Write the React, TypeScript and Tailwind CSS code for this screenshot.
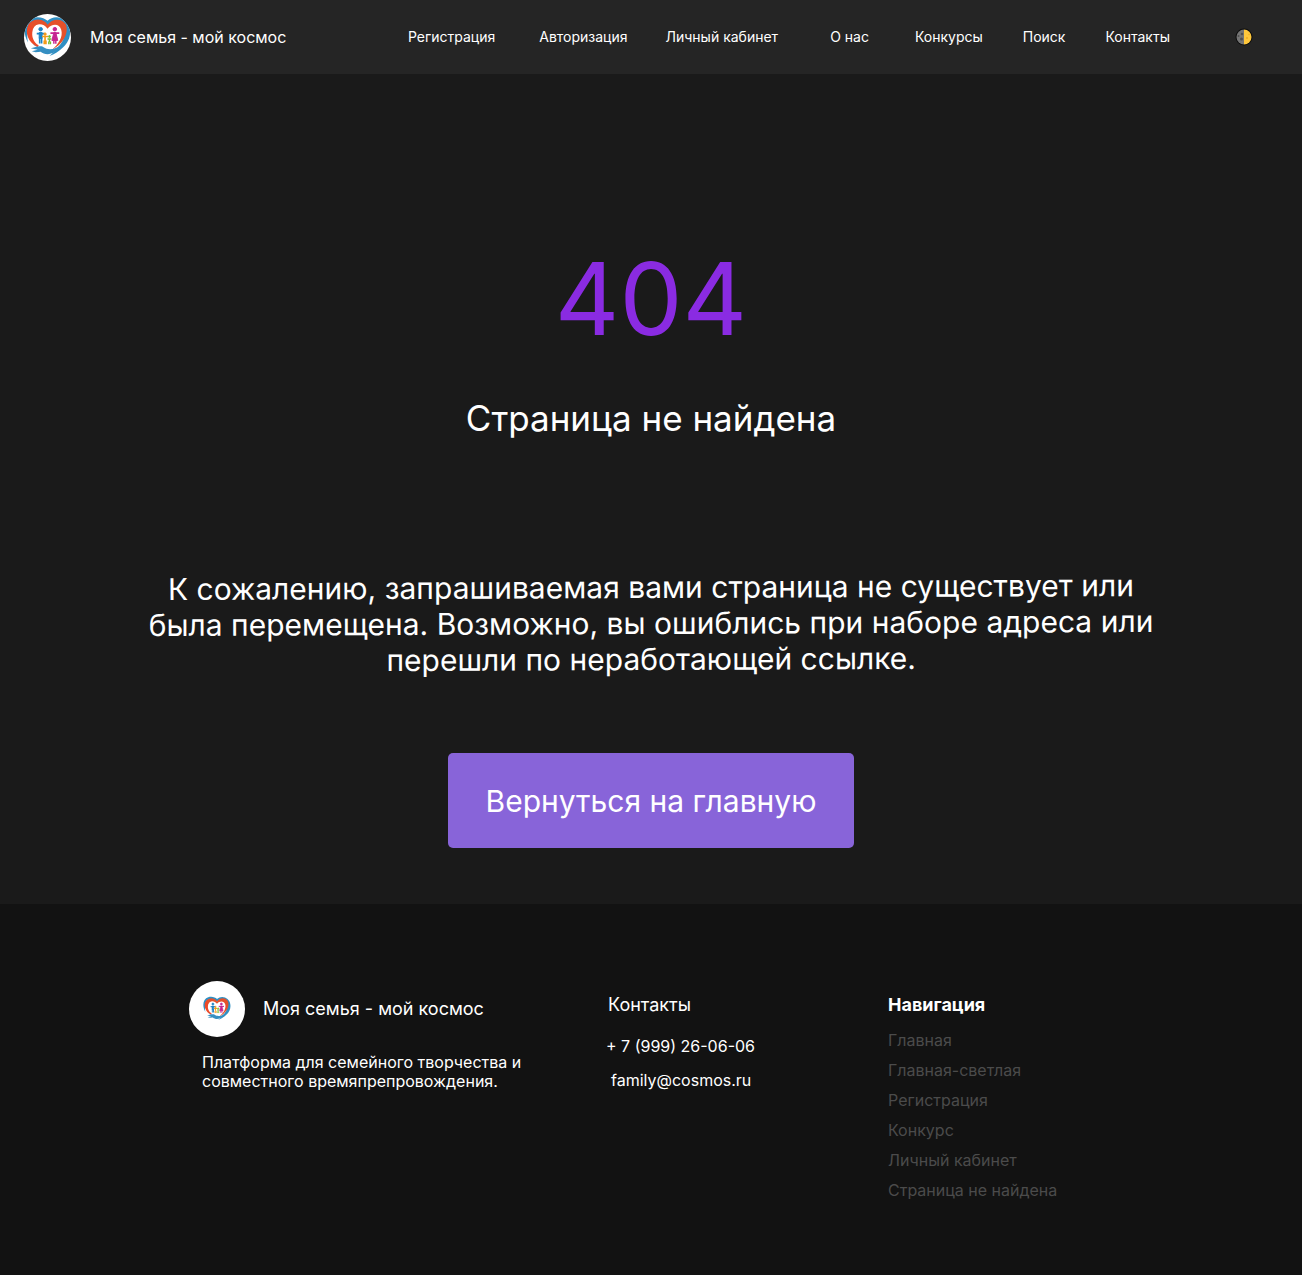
const navItems = [
  { label: 'Регистрация', gap: '' },
  { label: 'Авторизация', gap: 'ml-11' },
  { label: 'Личный кабинет', gap: 'ml-[38px]' },
  { label: 'О нас', gap: 'ml-[52px]' },
  { label: 'Конкурсы', gap: 'ml-[46px]' },
  { label: 'Поиск', gap: 'ml-10' },
  { label: 'Контакты', gap: 'ml-10' },
];

const footerLinks = ['Главная', 'Главная-светлая', 'Регистрация', 'Конкурс', 'Личный кабинет', 'Страница не найдена'];

function FamilyHeart({ className }: { className: string }) {
  return (
    <svg viewBox="0 0 48 48" className={className} aria-hidden="true">
      <path
        d="M4 29C-2 18 0 7 9 4C15 2 21 4 24 7C29 2 37 2 42 7C50 14 48 27 40 34C36 38 31 41 26 43C35 35 43 26 42 16C41 6 30 5 24 12C18 5 8 5 5 12C3 18 3 24 4 29Z"
        fill="#2f8fc3"
      />
      <path
        d="M14 34C4 29 1 19 4 12C8 4 19 4 24 11C20 9 11 8 9 16C7 23 10 29 15 32Z"
        fill="#ee4927"
      />
      <path
        d="M24 11C29 4 39 4 43 11C46 21 39 31 28 37C36 30 40 23 38 16C36 9 28 10 24 15C20 9 12 9 9 15L6 10C12 4 20 5 24 11Z"
        fill="#e5512a"
      />
      <path d="M9 30C13 36 17 31 20 34C24 37 31 37 37 32C32 42 22 43 17 38.500L12 39L8 38L14 36.500L7 35L13 33.500Z" fill="#358fc2" />
      <g fill="#1b83c5" stroke="#1b83c5">
        <circle cx="17" cy="15.500" r="1.800" />
        <path d="M13 20H21" fill="none" strokeWidth="1.800" />
        <path d="M15.500 19H18.500V25H15.500Z" />
        <path d="M16 24V30M18 24V30" strokeWidth="1.600" />
      </g>
      <g fill="#f49a18" stroke="#f49a18">
        <circle cx="21.500" cy="20.500" r="1.200" />
        <path d="M18.500 23H24.500M21.500 22V27M20.700 27V31M22.400 27V31" fill="none" strokeWidth="1.700" />
      </g>
      <g fill="#77bd32" stroke="#77bd32">
        <circle cx="26" cy="23" r="1" />
        <path d="M24 25.500H28M26 25V28.500M25.300 28V31M27 28V31" fill="none" strokeWidth="1.400" />
      </g>
      <g fill="#c62591" stroke="#c62591">
        <circle cx="31.500" cy="15.500" r="1.800" />
        <path d="M27 19.500H36" fill="none" strokeWidth="1.800" />
        <path d="M30.500 19H32.500L34.500 27H28.500Z" />
        <path d="M30.500 26V30.500M32.500 26V30.500" strokeWidth="1.500" />
      </g>
    </svg>
  );
}

function HalfMoon() {
  return (
    <svg viewBox="0 0 18 18" className="size-[18px]" aria-hidden="true">
      <circle cx="9" cy="9" r="8.500" fill="#0d0d0d" />
      <path d="M9 1.500A7.500 7.500 0 0 0 9 16.500Z" fill="#757575" />
      <path d="M9 1.500A7.500 7.500 0 0 1 9 16.500Z" fill="#ffc73b" />
      <circle cx="7" cy="6" r="1.300" fill="#4f4f4f" />
      <circle cx="3.500" cy="8" r="1" fill="#4f4f4f" />
      <circle cx="6.500" cy="11" r="1.500" fill="#4f4f4f" />
      <circle cx="12" cy="10" r="1" fill="#edab23" />
      <circle cx="14" cy="6.500" r="0.700" fill="#edab23" />
    </svg>
  );
}

export default function App() {
  return (
    <div className="flex min-h-screen flex-col bg-[#1a1a1a] font-['Inter',sans-serif] text-white">
      <header className="flex h-[74px] items-center bg-[#252525] pr-[49px] pl-6">
        <a href="#" className="flex items-center gap-[19px] whitespace-nowrap">
          <span className="flex size-[47px] items-center justify-center overflow-hidden rounded-full bg-white">
            <FamilyHeart className="size-[47px]" />
          </span>
          <span>Моя семья - мой космос</span>
        </a>
        <nav aria-label="Основное меню" className="ml-auto flex items-center text-sm whitespace-nowrap">
          {navItems.map((item) => (
            <a key={item.label} href="#" className={item.gap}>
              {item.label}
            </a>
          ))}
        </nav>
        <button type="button" aria-label="Сменить тему" className="ml-[65px]">
          <HalfMoon />
        </button>
      </header>

      <main className="flex flex-col items-center px-6 pt-[163px] pb-14 text-center">
        <h1 className="text-[100px] leading-[124px] text-[#8a2be2]">404</h1>
        <h2 className="mt-[35px] text-[35px] leading-[44px]">Страница не найдена</h2>
        <p className="mt-[129px] max-w-[1032px] -rotate-[0.23deg] text-[30px] leading-9">
          К сожалению, запрашиваемая вами страница не существует или была перемещена. Возможно, вы
          ошиблись при наборе адреса или перешли по неработающей ссылке.
        </p>
        <a href="#" className="mt-[76px] rounded-[5px] bg-[#8864d9] px-[38px] pt-[30px] pb-7 text-[30px] leading-[37px]">
          Вернуться на главную
        </a>
      </main>

      <footer className="grow bg-[#121212] pt-[77px] pb-16">
        <div className="mx-auto grid max-w-[924px] grid-cols-[417fr_282fr_225fr]">
          <div>
            <a href="#" className="flex items-center gap-[18px] text-lg">
              <span className="flex size-14 items-center justify-center rounded-full bg-white">
                <FamilyHeart className="size-7" />
              </span>
              <span>Моя семья - мой космос</span>
            </a>
            <p className="mt-4 ml-[13px] max-w-[340px] leading-[19px]">
              Платформа для семейного творчества и совместного времяпрепровождения.
            </p>
          </div>
          <address className="flex flex-col items-start pt-2.5 not-italic">
            <h3 className="ml-0.5 text-lg">Контакты</h3>
            <a href="tel:+7999260606" className="mt-[17px] leading-5">+ 7 (999) 26-06-06</a>
            <a href="mailto:family@cosmos.ru" className="mt-3.5 ml-[5px] leading-5">family@cosmos.ru</a>
          </address>
          <nav aria-label="Навигация" className="pt-2.5">
            <h3 className="text-lg font-bold">Навигация</h3>
            <ul className="mt-[9px] flex flex-col gap-1.5 text-[#4b4b4b]">
              {footerLinks.map((label) => (
                <li key={label}>
                  <a href="#">{label}</a>
                </li>
              ))}
            </ul>
          </nav>
        </div>
      </footer>
    </div>
  );
}
